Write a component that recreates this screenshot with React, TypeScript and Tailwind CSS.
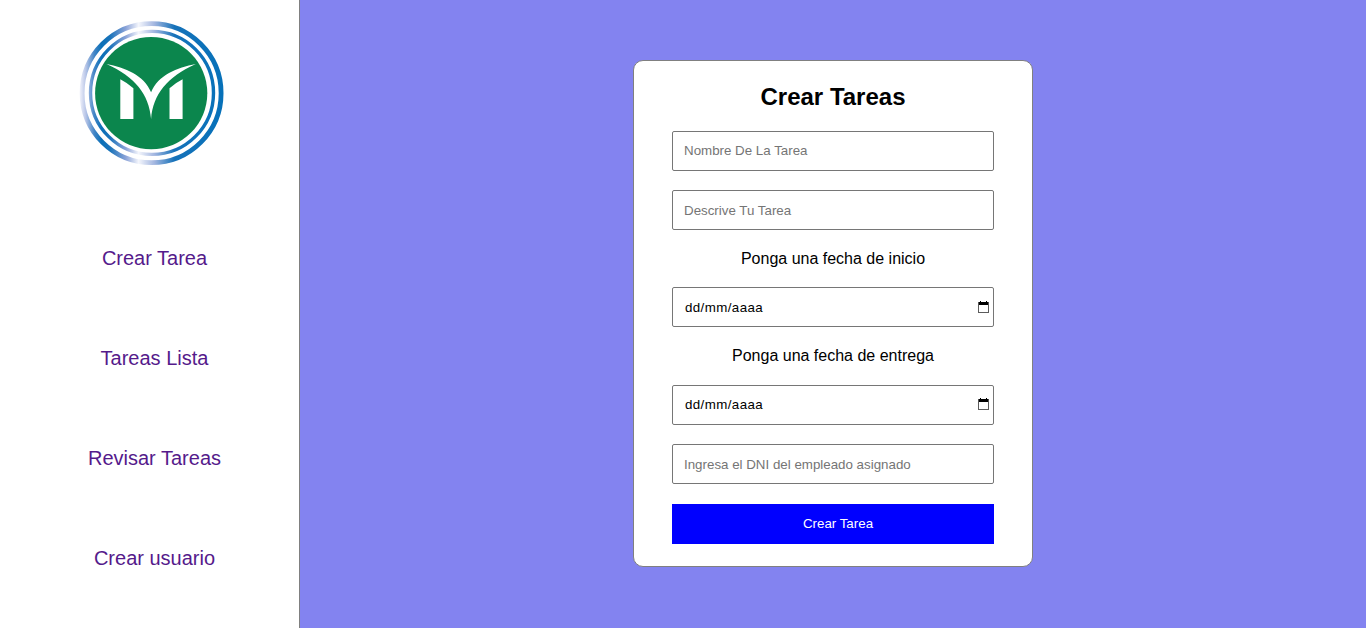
import React from "react";

const links = ["Crear Tarea", "Tareas Lista", "Revisar Tareas", "Crear usuario"];

function Logo() {
  return (
    <svg width="150" height="150" viewBox="0 0 150 150" role="img" aria-label="Logo">
      <defs>
        <linearGradient id="ring" gradientUnits="userSpaceOnUse" x1="3" y1="0" x2="146" y2="0">
          <stop offset="0" stopColor="#eef0fa" />
          <stop offset="0.04" stopColor="#b9c6e8" />
          <stop offset="0.1" stopColor="#4385c6" />
          <stop offset="0.15" stopColor="#0a70b8" />
          <stop offset="0.21" stopColor="#1a73ba" />
          <stop offset="0.32" stopColor="#8ba3d8" />
          <stop offset="0.41" stopColor="#f4f6fc" />
          <stop offset="0.52" stopColor="#a3b6e0" />
          <stop offset="0.66" stopColor="#1672b9" />
          <stop offset="1" stopColor="#0671b9" />
        </linearGradient>
      </defs>
      <circle cx="74.6" cy="75.2" r="69.5" fill="none" stroke="url(#ring)" strokeWidth="4.8" />
      <circle cx="75" cy="74.9" r="61.5" fill="none" stroke="url(#ring)" strokeWidth="3.4" />
      <circle cx="74.2" cy="75.2" r="56.1" fill="#0b864d" />
      <path
        d="M29.5 46C48 49.5 67 57 74.1 74.3C81.2 57 100 49.5 118.8 46C90.2 59 76.2 76 74.1 101C72 76 58 59 29.5 46Z"
        fill="#fff"
      />
      <path d="M43.3 61.2Q50 64.6 56.4 70.2V101H43.3ZM105.6 61.2Q98.8 64.6 92.5 70.2V101H105.6Z" fill="#fff" />
    </svg>
  );
}

function TextField({ label, className = "" }: { label: string; className?: string }) {
  return (
    <input
      type="text"
      placeholder={label}
      className={`block h-10 w-full rounded-[2px] border border-[#767676] bg-white px-[11px] text-[13.333px] outline-none placeholder:text-[#757575] ${className}`}
    />
  );
}

function DateField({ textClass = "", iconClass = "" }: { textClass?: string; iconClass?: string }) {
  return (
    <div className="flex h-10 w-full items-center justify-between rounded-[2px] border border-[#767676] bg-white pr-1 pl-3 text-[13.333px]">
      <span className={`tracking-[0.4px] ${textClass}`}>dd/mm/aaaa</span>
      <svg className={iconClass} width="11" height="12" viewBox="0 0 11 12" shapeRendering="crispEdges">
        <rect x="0.5" y="2.5" width="10" height="9" fill="none" stroke="#5c5c5c" />
        <path d="M0 1H11V4H0Z" fill="#555" />
        <path d="M1 1H10V4H1ZM2 0H3V1H2ZM8 0H9V1H8Z" fill="#000" />
      </svg>
    </div>
  );
}

export default function App() {
  return (
    <div className="flex h-[628px] w-full overflow-hidden bg-[#8383f0] font-['Liberation_Sans',Arial,sans-serif] text-black">
      <aside className="w-[300px] shrink-0 border-r border-[#808080] bg-white">
        <div className="pt-[18px] pl-[77px]">
          <Logo />
        </div>
        <nav className="mt-10 flex flex-col pl-[10px] text-center text-xl text-[#551a8b]">
          {links.map((link) => (
            <a key={link} href="#" className="block h-[100px] leading-[100px]">
              {link}
            </a>
          ))}
        </nav>
      </aside>
      <main className="flex flex-1 items-start justify-center pt-[60px]">
        <form className="h-[507px] w-[400px] rounded-[10px] border border-[#808080] bg-white px-[38px] pt-[22px]">
          <h1 className="mb-5 text-center text-2xl leading-7 font-bold">Crear Tareas</h1>
          <TextField label="Nombre De La Tarea" className="pb-[2px]" />
          <div className="h-[19px]" />
          <TextField label="Descrive Tu Tarea" />
          <p className="py-5 text-center text-base leading-[17px]">Ponga una fecha de inicio</p>
          <DateField textClass="pt-[2px]" />
          <p className="pt-5 pb-[21px] text-center text-base leading-[17px]">Ponga una fecha de entrega</p>
          <DateField iconClass="mb-[2px]" />
          <div className="h-[19px]" />
          <TextField label="Ingresa el DNI del empleado asignado" />
          <button type="button" className="mt-5 block h-10 w-full bg-[#0000ff] pl-[10px] text-[13.333px] text-white">
            Crear Tarea
          </button>
        </form>
      </main>
    </div>
  );
}
